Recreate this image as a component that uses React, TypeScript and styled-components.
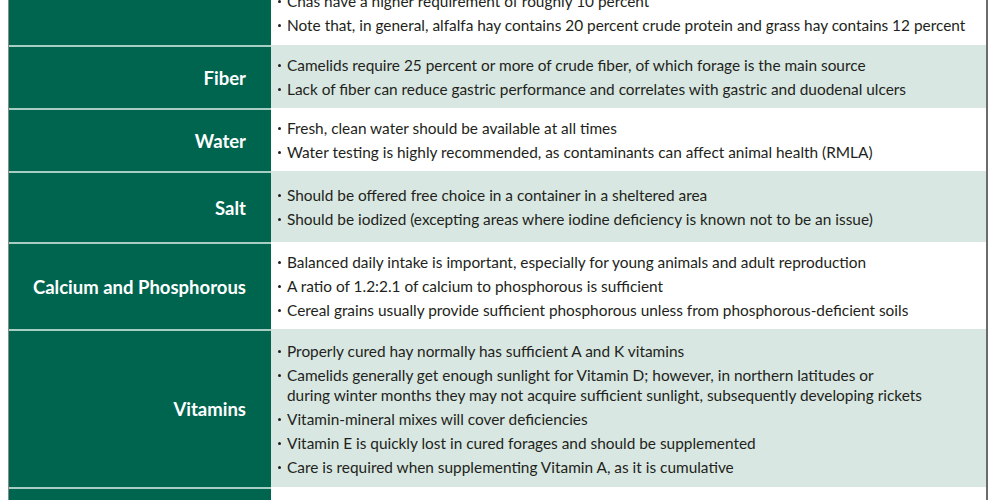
import styled, { createGlobalStyle } from 'styled-components';

const GlobalStyle = createGlobalStyle`
  html, body {
    margin: 0;
    padding: 0;
    background: #ffffff;
    overflow: hidden;
  }
`;

// whole chart sits a bit above the window, the first row is cut off
const Page = styled.div`
  width: 1000px;
  height: 500px;
  overflow: hidden;
  font-family: Lato, 'Open Sans', sans-serif;
`;

const Table = styled.div`
  margin: -20px 0 0 8px;
  width: 977px;
  border-left: 1px solid #8a8a8a;
  border-right: 2px solid #6b6b6b;
  display: grid;
  grid-template-columns: 262px 1fr;
`;

interface RowProps {
  shade: boolean;
  minH?: number;
}

const Label = styled.div<{ minH?: number }>`
  background: #00654f;
  border-top: 2px solid #a8cdc2;
  color: #ffffff;
  font-weight: 700;
  font-size: 18.5px;
  display: flex;
  align-items: center;
  justify-content: flex-end;
  padding: 0 25px 0 10px;
  min-height: ${(p) => (p.minH ? `${p.minH}px` : 'auto')};
  box-sizing: border-box;
  &:first-child {
    border-top: none;
  }
`;

const Cell = styled.ul<RowProps>`
  list-style: none;
  margin: 0;
  padding: 10px 12px 9px 7px;
  background: ${(p) => (p.shade ? '#d8e7e1' : '#ffffff')};
  min-height: ${(p) => (p.minH ? `${p.minH}px` : 'auto')};
  box-sizing: border-box;
  display: flex;
  flex-direction: column;
  justify-content: center;
  gap: 4px;
`;

const Item = styled.li`
  color: #231f20;
  font-size: 15.4px;
  line-height: 20px;
  padding-left: 9px;
  text-indent: -9px;
  white-space: nowrap;
  &::before {
    content: '';
    display: inline-block;
    width: 3px;
    height: 3px;
    border-radius: 50%;
    background: #231f20;
    margin-right: 6px;
    vertical-align: 4px;
    text-indent: 0;
  }
`;

type Section = {
  label: string;
  items: string[][];
  h: number;
};

const sections: Section[] = [
  {
    label: '',
    h: 65,
    items: [
      ['Chas have a higher requirement of roughly 10 percent'],
      ['Note that, in general, alfalfa hay contains 20 percent crude protein and grass hay contains 12 percent'],
    ],
  },
  {
    label: 'Fiber',
    h: 63,
    items: [
      ['Camelids require 25 percent or more of crude fiber, of which forage is the main source'],
      ['Lack of fiber can reduce gastric performance and correlates with gastric and duodenal ulcers'],
    ],
  },
  {
    label: 'Water',
    h: 62,
    items: [
      ['Fresh, clean water should be available at all times'],
      ['Water testing is highly recommended, as contaminants can affect animal health (RMLA)'],
    ],
  },
  {
    label: 'Salt',
    h: 71,
    items: [
      ['Should be offered free choice in a container in a sheltered area'],
      ['Should be iodized (excepting areas where iodine deficiency is known not to be an issue)'],
    ],
  },
  {
    label: 'Calcium and Phosphorous',
    h: 87,
    items: [
      ['Balanced daily intake is important, especially for young animals and adult reproduction'],
      ['A ratio of 1.2:2.1 of calcium to phosphorous is sufficient'],
      ['Cereal grains usually provide sufficient phosphorous unless from phosphorous-deficient soils'],
    ],
  },
  {
    label: 'Vitamins',
    h: 158,
    items: [
      ['Properly cured hay normally has sufficient A and K vitamins'],
      [
        'Camelids generally get enough sunlight for Vitamin D; however, in northern latitudes or',
        'during winter months they may not acquire sufficient sunlight, subsequently developing rickets',
      ],
      ['Vitamin-mineral mixes will cover deficiencies'],
      ['Vitamin E is quickly lost in cured forages and should be supplemented'],
      ['Care is required when supplementing Vitamin A, as it is cumulative'],
    ],
  },
  {
    label: '',
    h: 60,
    items: [],
  },
];

const App = () => {
  return (
    <Page>
      <GlobalStyle />
      <Table>
        {sections.map((s, i) => [
          <Label key={`l${i}`} minH={s.h}>
            {s.label}
          </Label>,
          <Cell key={`c${i}`} shade={i % 2 === 1} minH={s.h}>
            {s.items.map((lines, j) => (
              <Item key={j}>
                {lines.map((ln, k) => (
                  <span key={k}>
                    {k > 0 && <br />}
                    {ln}
                  </span>
                ))}
              </Item>
            ))}
          </Cell>,
        ])}
      </Table>
    </Page>
  );
};

export default App;
